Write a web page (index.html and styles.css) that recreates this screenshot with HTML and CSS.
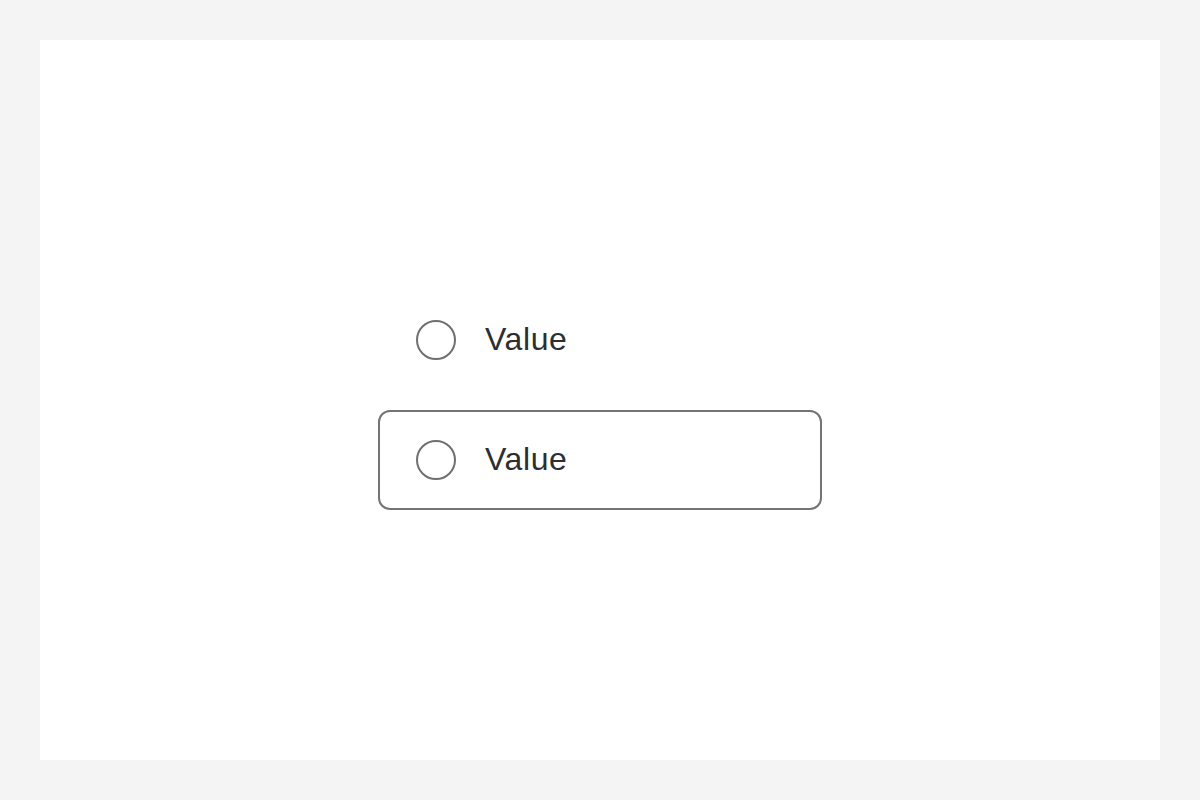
FILE: index.html
```html
<!DOCTYPE html>
<html>
<head>
<meta charset="utf-8">
<link rel="stylesheet" href="styles.css">
</head>
<body>
<main class="panel">
  <div class="options">
    <label class="option">
      <span class="radio"></span>
      <span class="label">Value</span>
    </label>
    <label class="option option--outlined">
      <span class="radio"></span>
      <span class="label">Value</span>
    </label>
  </div>
</main>
</body>
</html>
```

FILE: styles.css
```css
html, body {
  margin: 0;
  padding: 0;
}
body {
  background: #f4f4f4;
  width: 1200px;
  height: 800px;
  padding: 40px;
  box-sizing: border-box;
  font-family: "Liberation Sans", Arial, sans-serif;
}
.panel {
  background: #ffffff;
  width: 1120px;
  height: 720px;
  display: flex;
  align-items: center;
  justify-content: center;
}
.options {
  display: flex;
  flex-direction: column;
  gap: 20px;
}
.option {
  box-sizing: border-box;
  width: 444px;
  height: 100px;
  border: 2px solid transparent;
  border-radius: 12px;
  padding: 0 36px;
  display: flex;
  align-items: center;
  gap: 29px;
}
.option--outlined {
  border-color: #747474;
}
.radio {
  box-sizing: border-box;
  width: 40px;
  height: 40px;
  border: 2px solid #707070;
  border-radius: 50%;
  flex: none;
}
.label {
  font-size: 32px;
  color: #2e2e2e;
  line-height: 40px;
  letter-spacing: 0.6px;
  padding-bottom: 2px;
}
```
